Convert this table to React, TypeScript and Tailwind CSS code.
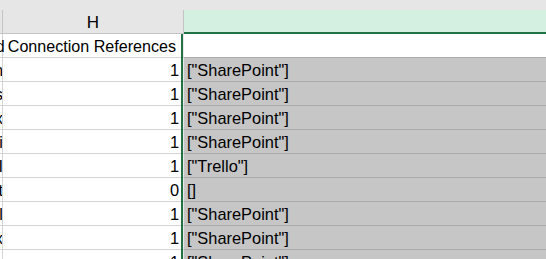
import React from "react";

type Row = { g: string; count: number; refs: string };

const rows: Row[] = [
  { g: "n", count: 1, refs: '["SharePoint"]' },
  { g: "s", count: 1, refs: '["SharePoint"]' },
  { g: "x", count: 1, refs: '["SharePoint"]' },
  { g: "i", count: 1, refs: '["SharePoint"]' },
  { g: "I", count: 1, refs: '["Trello"]' },
  { g: "t", count: 0, refs: "[]" },
  { g: "l", count: 1, refs: '["SharePoint"]' },
  { g: "x", count: 1, refs: '["SharePoint"]' },
  { g: "e", count: 1, refs: '["SharePoint"]' },
];

export default function App() {
  return (
    <div
      className="w-[546px] h-[259px] overflow-hidden bg-white text-black text-[16.4px]"
      style={{ fontFamily: '"Liberation Sans", Arial, sans-serif' }}
    >
      {/* strip above the column letters */}
      <div className="h-[10px] bg-[#e6e6e6]" />

      {/* column letters */}
      <div className="flex h-[24px]">
        <div className="w-[3px] shrink-0 bg-[#e6e6e6] border-r border-b border-[#c4c4c4]" />
        <div className="w-[181px] shrink-0 bg-[#e6e6e6] border-r border-b border-[#c4c4c4] flex items-center justify-center pt-[2px] text-[17px] leading-none">
          H
        </div>
        <div className="flex-1 bg-[#d3f0e0] border-b-2 border-[#217346]" />
      </div>

      {/* title row */}
      <div className="flex h-[24px]">
        <div className="w-[3px] shrink-0 border-r border-b border-[#d4d4d4]" />
        <div className="w-[178px] shrink-0 border-b border-[#d4d4d4] flex justify-end pr-[5px] pt-[1px] leading-[23px] whitespace-nowrap text-[16.1px]">
          <span>Used</span>
          <span className="ml-[3px]">Connection References</span>
        </div>
        <div className="w-[2px] shrink-0 bg-[#217346]" />
        <div className="flex-1 border-l border-[#e8e8e8] border-b border-b-[#ababab] bg-white" />
      </div>

      {/* data rows */}
      {rows.map((r, i) => (
        <div key={i} className="flex h-[24px]">
          <div className="w-[3px] shrink-0 border-r border-b border-[#d4d4d4] overflow-hidden flex justify-end pt-[1px] leading-[23px]">
            <span className="mr-[-1px]">{r.g}</span>
          </div>
          <div className="w-[178px] shrink-0 border-b border-[#d4d4d4] flex justify-end pr-[2px] pt-[1px] leading-[23px]">
            {r.count}
          </div>
          <div className="w-[2px] shrink-0 bg-[#217346]" />
          <div className="flex-1 border-l border-[#e8e8e8] border-b border-b-[#ababab] bg-[#c6c6c6] pl-[3px] pt-[1px] leading-[23px] whitespace-nowrap">
            {r.refs}
          </div>
        </div>
      ))}
    </div>
  );
}
